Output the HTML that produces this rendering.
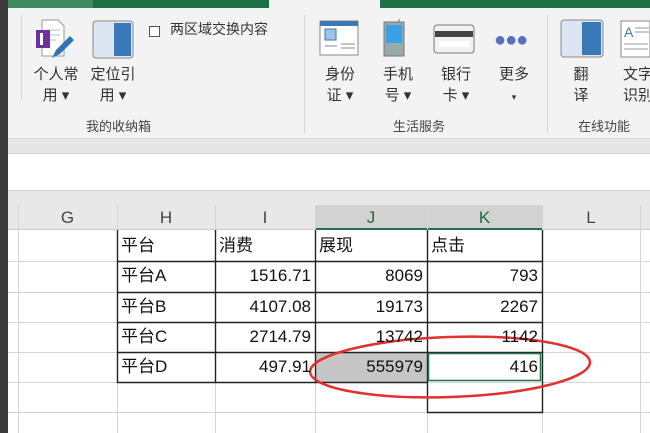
<!DOCTYPE html>
<html><head><meta charset="utf-8"><style>
*{margin:0;padding:0;box-sizing:border-box}
body{width:650px;height:433px;overflow:hidden;position:relative;background:#fff;font-family:"Liberation Sans","Noto Sans CJK SC",sans-serif;color:#222}
.a{position:absolute}
.lbl{position:absolute;font-size:15px;text-align:center;line-height:21px;color:#333}
.grp{position:absolute;font-size:13px;color:#444;top:116px}
.c{position:absolute;font-size:17px;line-height:30px;color:#111}
.r{text-align:right}
</style></head><body>
<div class="a" style="left:0;top:0;width:650px;height:8px;background:#1e7145"></div>
<div class="a" style="left:8px;top:0;width:85px;height:8px;background:#3f8a5e"></div>
<div class="a" style="left:269px;top:0;width:111px;height:8px;background:#f3f3f3"></div>
<div class="a" style="left:0;top:8px;width:650px;height:130px;background:#f3f3f3"></div>
<div class="a" style="left:0;top:138px;width:650px;height:16px;background:#e6e6e6;border-top:1px solid #d8d8d8;border-bottom:1px solid #d4d4d4"></div>
<div class="a" style="left:0;top:154px;width:650px;height:36px;background:#fff"></div>
<div class="a" style="left:0;top:190px;width:650px;height:40px;background:#e8e8e8;border-top:1px solid #d0d0d0"></div>
<div class="a" style="left:21px;top:15px;width:1px;height:85px;background:#d6d6d6"></div>
<div class="a" style="left:304px;top:15px;width:1px;height:118px;background:#d6d6d6"></div>
<div class="a" style="left:547px;top:15px;width:1px;height:118px;background:#d6d6d6"></div>
<svg class="a" style="left:34px;top:18px" width="46" height="42">
<path d="M8 2h16l6 6v30H8z" fill="#fff" stroke="#999"/><path d="M12 12h14M12 17h14M12 22h10" stroke="#bbb"/>
<rect x="2" y="12" width="14" height="18" fill="#7030a0"/><rect x="6" y="15" width="3" height="12" fill="#fff"/>
<path d="M18 40l4-8 14-14 4 4-14 14z" fill="#2e75b6"/></svg>
<svg class="a" style="left:92px;top:20px" width="42" height="40"><rect x="1" y="1" width="40" height="37" rx="3" fill="#dce6f2" stroke="#888"/><rect x="22" y="3" width="17" height="33" fill="#3a78b8"/></svg>
<div class="a" style="left:149px;top:26px;width:11px;height:11px;border:1px solid #555;background:#fff"></div>
<div class="lbl" style="left:170px;top:19px;font-size:14px">两区域交换内容</div>
<div class="lbl" style="left:28px;top:64px;width:56px">个人常<br>用 ▾</div>
<div class="lbl" style="left:85px;top:64px;width:56px">定位引<br>用 ▾</div>
<div class="grp" style="left:86px">我的收纳箱</div>
<svg class="a" style="left:319px;top:20px" width="40" height="36"><rect x="1" y="1" width="38" height="34" fill="#fff" stroke="#888"/><rect x="1" y="1" width="38" height="5" fill="#3a78b8"/><rect x="6" y="9" width="11" height="11" fill="#9dc3e6" stroke="#3a78b8"/><path d="M22 24h14M22 28h14M6 26h12" stroke="#888"/></svg>
<svg class="a" style="left:383px;top:18px" width="24" height="40"><rect x="1" y="4" width="20" height="34" fill="#9aa" stroke="#777"/><rect x="3" y="7" width="16" height="18" fill="#3ca0e8"/><path d="M16 4V1" stroke="#777"/></svg>
<svg class="a" style="left:433px;top:24px" width="42" height="30"><rect x="1" y="1" width="40" height="28" rx="3" fill="#f2f2f2" stroke="#777"/><rect x="2" y="7" width="38" height="6" fill="#444"/><rect x="6" y="17" width="30" height="6" fill="#fff"/></svg>
<div class="a" style="left:494px;top:30px;font-size:20px;color:#5a6fbf;letter-spacing:-1px;line-height:20px">●●●</div>
<div class="lbl" style="left:320px;top:64px;width:40px">身份<br>证 ▾</div>
<div class="lbl" style="left:378px;top:64px;width:40px">手机<br>号 ▾</div>
<div class="lbl" style="left:436px;top:64px;width:40px">银行<br>卡 ▾</div>
<div class="lbl" style="left:494px;top:64px;width:40px">更多<br><span style="font-size:9px">▾</span></div>
<div class="grp" style="left:393px">生活服务</div>
<svg class="a" style="left:560px;top:19px" width="44" height="40"><rect x="1" y="1" width="42" height="37" rx="3" fill="#dce6f2" stroke="#888"/><rect x="22" y="3" width="19" height="33" fill="#3a78b8"/></svg>
<svg class="a" style="left:620px;top:20px" width="30" height="38"><rect x="1" y="1" width="29" height="36" fill="#fff" stroke="#888"/><text x="4" y="17" font-size="14" fill="#3a78b8" font-family="Liberation Sans">A</text><path d="M15 8h14M15 12h14M4 24h24M4 29h24" stroke="#999"/></svg>
<div class="lbl" style="left:566px;top:64px;width:30px">翻<br>译</div>
<div class="lbl" style="left:618px;top:64px;width:40px">文字<br>识别</div>
<div class="grp" style="left:578px">在线功能</div>
<div class="a" style="left:0;top:0;width:8px;height:433px;background:#3a3a3a"></div>
<div class="a" style="left:315px;top:205px;width:227px;height:25px;background:#d2d2d2"></div>
<div class="a" style="left:315px;top:228px;width:227px;height:2px;background:#217346"></div>
<div class="a" style="left:8px;top:229px;width:307px;height:1px;background:#ccc"></div>
<div class="a" style="left:542px;top:229px;width:108px;height:1px;background:#ccc"></div>
<div class="c" style="left:18px;top:203px;width:99px;text-align:center;color:#444">G</div>
<div class="c" style="left:117px;top:203px;width:98px;text-align:center;color:#444">H</div>
<div class="c" style="left:215px;top:203px;width:100px;text-align:center;color:#444">I</div>
<div class="c" style="left:315px;top:203px;width:112px;text-align:center;color:#1e6b3e">J</div>
<div class="c" style="left:427px;top:203px;width:115px;text-align:center;color:#1e6b3e">K</div>
<div class="c" style="left:542px;top:203px;width:98px;text-align:center;color:#444">L</div>
<svg class="a" style="left:0;top:0" width="650" height="433">
<g stroke="#d4d4d4" stroke-width="1">
<path d="M18.5 205V433M117.5 205V433M215.5 205V433M315.5 205V433M427.5 205V433M542.5 205V433M640.5 205V433"/>
<path d="M8 261.5H650M8 292.5H650M8 322.5H650M8 352.5H650M8 382.5H650M8 412.5H650"/>
</g>
<rect x="315" y="352" width="112" height="30" fill="#c6c6c6"/>
<g stroke="#222" stroke-width="1.4" fill="none">
<path d="M117.5 230V382.5H427.5M215.5 230V382M315.5 230V382M427.5 230V412.5H542.5V230"/>
<path d="M117 261.5H542M117 292.5H542M117 322.5H542M117 352.5H542"/>
</g>
<rect x="428.5" y="353.5" width="112" height="27" fill="none" stroke="#217346" stroke-width="1.5"/>
<ellipse cx="450" cy="367" rx="140" ry="30" fill="none" stroke="#e03030" stroke-width="2.5" transform="rotate(-2 450 367)"/>
</svg>
<div class="c" style="left:121px;top:231px">平台</div>
<div class="c" style="left:219px;top:231px">消费</div>
<div class="c" style="left:319px;top:231px">展现</div>
<div class="c" style="left:431px;top:231px">点击</div>
<div class="c" style="left:121px;top:261px">平台A</div>
<div class="c" style="left:121px;top:292px">平台B</div>
<div class="c" style="left:121px;top:322px">平台C</div>
<div class="c" style="left:121px;top:352px">平台D</div>
<div class="c r" style="left:215px;top:261px;width:96px">1516.71</div>
<div class="c r" style="left:215px;top:292px;width:96px">4107.08</div>
<div class="c r" style="left:215px;top:322px;width:96px">2714.79</div>
<div class="c r" style="left:215px;top:352px;width:96px">497.91</div>
<div class="c r" style="left:315px;top:261px;width:108px">8069</div>
<div class="c r" style="left:315px;top:292px;width:108px">19173</div>
<div class="c r" style="left:315px;top:322px;width:108px">13742</div>
<div class="c r" style="left:315px;top:352px;width:108px">555979</div>
<div class="c r" style="left:427px;top:261px;width:111px">793</div>
<div class="c r" style="left:427px;top:292px;width:111px">2267</div>
<div class="c r" style="left:427px;top:322px;width:111px">1142</div>
<div class="c r" style="left:427px;top:352px;width:111px">416</div>
</body></html>
